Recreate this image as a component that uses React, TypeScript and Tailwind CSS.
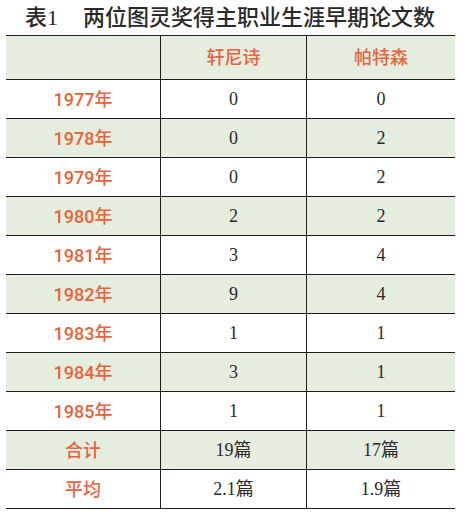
import React from 'react';

const rows = [
  { label: '1977年', a: '0', b: '0' },
  { label: '1978年', a: '0', b: '2' },
  { label: '1979年', a: '0', b: '2' },
  { label: '1980年', a: '2', b: '2' },
  { label: '1981年', a: '3', b: '4' },
  { label: '1982年', a: '9', b: '4' },
  { label: '1983年', a: '1', b: '1' },
  { label: '1984年', a: '3', b: '1' },
  { label: '1985年', a: '1', b: '1' },
  { label: '合计', a: '19篇', b: '17篇' },
  { label: '平均', a: '2.1篇', b: '1.9篇' },
];

const sans = { fontFamily: 'Roboto, "Noto Sans CJK SC", sans-serif' };
const serif = { fontFamily: '"Liberation Serif", "Noto Sans CJK SC", serif' };

export default function App() {
  return (
    <div className="w-[464px] h-[522px] bg-white">
      <div
        className="h-[35px] pl-[25px] flex items-center text-[22px] text-[#2a2a2a] leading-none font-medium"
        style={serif}
      >
        <span>表1</span>
        <span className="ml-[25px]">两位图灵奖得主职业生涯早期论文数</span>
      </div>

      <div className="ml-[6px] w-[449px] border-t border-[#1c1c1c]">
        <div className="grid grid-cols-[155px_146px_148px] bg-[#e5eddf]">
          <div className="h-[44px] border-b border-r border-[#1c1c1c]" />
          <div
            className="h-[44px] border-b border-r border-[#1c1c1c] flex items-center justify-center text-[18px] font-medium text-[#e8633c]"
            style={sans}
          >
            轩尼诗
          </div>
          <div
            className="h-[44px] border-b border-[#1c1c1c] flex items-center justify-center text-[18px] font-medium text-[#e8633c]"
            style={sans}
          >
            帕特森
          </div>
        </div>

        {rows.map((r, i) => (
          <div
            key={r.label}
            className={
              i % 2 === 1
                ? 'grid grid-cols-[155px_146px_148px] bg-[#e5eddf]'
                : 'grid grid-cols-[155px_146px_148px] bg-white'
            }
          >
            <div
              className="h-[39px] border-b border-r border-[#1c1c1c] flex items-center justify-center text-[18px] font-medium text-[#e8633c]"
              style={sans}
            >
              {r.label}
            </div>
            <div
              className="h-[39px] border-b border-r border-[#1c1c1c] flex items-center justify-center text-[18px] text-[#2a2a2a]"
              style={serif}
            >
              {r.a}
            </div>
            <div
              className="h-[39px] border-b border-[#1c1c1c] flex items-center justify-center text-[18px] text-[#2a2a2a]"
              style={serif}
            >
              {r.b}
            </div>
          </div>
        ))}
      </div>
    </div>
  );
}
